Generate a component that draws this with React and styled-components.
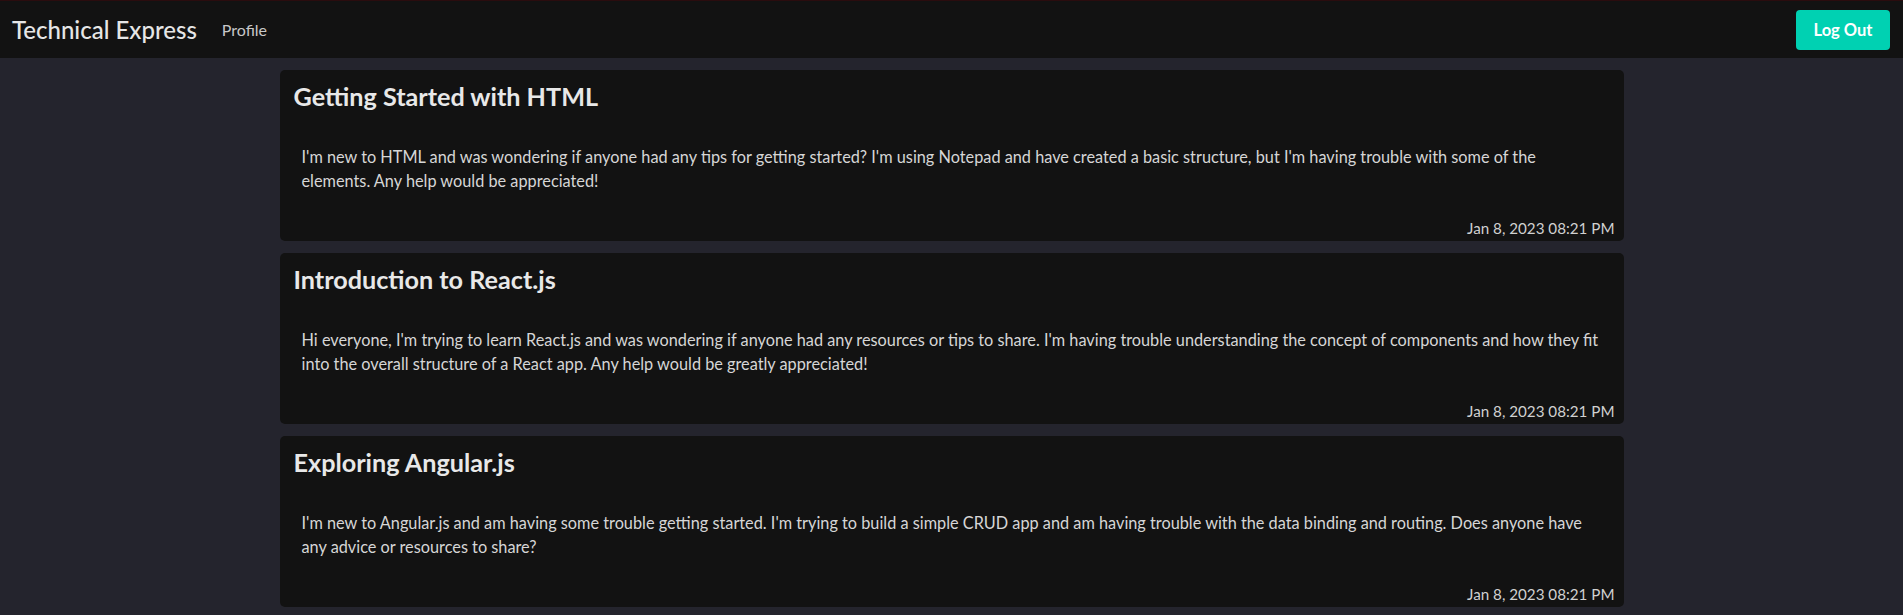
import React from "react";
import styled, { createGlobalStyle } from "styled-components";

const GlobalStyle = createGlobalStyle`
  html, body {
    margin: 0;
    padding: 0;
    background: #24242d;
  }
  body {
    font-family: Lato, "Noto Sans", sans-serif;
    color: #dcdcdc;
  }
`;

const Navbar = styled.nav`
  height: 58px;
  box-sizing: border-box;
  background: #121212;
  border-top: 1px solid #2a0c0e;
  display: flex;
  align-items: center;
  padding: 0 13px 0 12px;
`;

const Brand = styled.div`
  font-size: 24px;
  font-weight: 500;
  color: #e6e6e6;
`;

const NavLink = styled.a`
  margin-left: 25px;
  font-size: 16px;
  color: #c8c8c8;
  text-decoration: none;
  cursor: pointer;
`;

const Spacer = styled.div`
  flex: 1;
`;

const Button = styled.button`
  width: 94px;
  height: 40px;
  border: none;
  border-radius: 4px;
  background: #00d1b2;
  color: #fff;
  font-family: inherit;
  font-size: 16.5px;
  font-weight: 700;
  cursor: pointer;
`;

const Main = styled.main`
  display: flex;
  flex-direction: column;
  align-items: center;
  gap: 12px;
  padding-top: 12px;
`;

const Card = styled.article`
  width: 1344px;
  min-height: 171px;
  box-sizing: border-box;
  background: #121212;
  border-radius: 5px;
  display: flex;
  flex-direction: column;
  padding: 11px 9px 1px 14px;
`;

const Title = styled.h2`
  margin: 0;
  font-size: 25.2px;
  line-height: 30px;
  font-weight: 700;
  color: #e8e8e8;
`;

const Body = styled.p`
  margin: 34px 16px 0 8px;
  font-size: 16.3px;
  line-height: 24px;
  color: #d6d6d6;
`;

const Stamp = styled.time`
  margin-top: auto;
  align-self: flex-end;
  font-size: 15.2px;
  line-height: 24px;
  color: #d0d0d0;
`;

const posts = [
  {
    title: "Getting Started with HTML",
    body: "I'm new to HTML and was wondering if anyone had any tips for getting started? I'm using Notepad and have created a basic structure, but I'm having trouble with some of the elements. Any help would be appreciated!",
    date: "Jan 8, 2023 08:21 PM",
  },
  {
    title: "Introduction to React.js",
    body: "Hi everyone, I'm trying to learn React.js and was wondering if anyone had any resources or tips to share. I'm having trouble understanding the concept of components and how they fit into the overall structure of a React app. Any help would be greatly appreciated!",
    date: "Jan 8, 2023 08:21 PM",
  },
  {
    title: "Exploring Angular.js",
    body: "I'm new to Angular.js and am having some trouble getting started. I'm trying to build a simple CRUD app and am having trouble with the data binding and routing. Does anyone have any advice or resources to share?",
    date: "Jan 8, 2023 08:21 PM",
  },
];

export default function App() {
  return (
    <>
      <GlobalStyle />
      <Navbar>
        <Brand>Technical Express</Brand>
        <NavLink>Profile</NavLink>
        <Spacer />
        <Button>Log Out</Button>
      </Navbar>
      <Main>
        {posts.map((p, i) => (
          <Card key={i}>
            <Title>{p.title}</Title>
            <Body>{p.body}</Body>
            <Stamp>{p.date}</Stamp>
          </Card>
        ))}
      </Main>
    </>
  );
}
